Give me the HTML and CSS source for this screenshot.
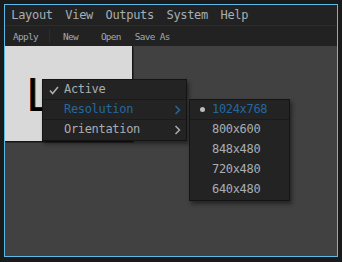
FILE: index.html
```html
<!DOCTYPE html>
<html lang="en">

<head>
    <meta charset="utf-8">
    <title>Display Settings</title>
    <link rel="stylesheet" href="styles.css">
</head>

<body>
    <div class="window">
        <nav class="menubar">
            <span class="menubar-item">Layout</span>
            <span class="menubar-item">View</span>
            <span class="menubar-item">Outputs</span>
            <span class="menubar-item">System</span>
            <span class="menubar-item">Help</span>
        </nav>

        <div class="toolbar">
            <button class="tool tool-apply">Apply</button>
            <span class="tool-sep"></span>
            <button class="tool tool-new">New</button>
            <button class="tool tool-open">Open</button>
            <button class="tool">Save As</button>
        </div>

        <div class="canvas">
            <div class="output">
                <span class="output-name">L</span>
            </div>

            <div class="menu context-menu">
                <div class="menu-item">
                    <svg class="check" width="10" height="9" viewBox="0 0 10 9">
                        <path d="M1 4.6 L3.6 7.6 L9 1" fill="none" stroke="#a9aeb3" stroke-width="1.6" />
                    </svg>
                    Active
                </div>
                <div class="menu-item current">
                    Resolution
                    <svg class="arrow" width="7" height="10" viewBox="0 0 7 10">
                        <path d="M1.5 1 L5.5 5 L1.5 9" fill="none" stroke="#2468a0" stroke-width="1.5" />
                    </svg>
                </div>
                <div class="menu-item">
                    Orientation
                    <svg class="arrow" width="7" height="10" viewBox="0 0 7 10">
                        <path d="M1.5 1 L5.5 5 L1.5 9" fill="none" stroke="#a9aeb3" stroke-width="1.5" />
                    </svg>
                </div>
            </div>

            <div class="menu sub-menu">
                <div class="menu-item current"><span class="bullet"></span>1024x768</div>
                <div class="menu-item">800x600</div>
                <div class="menu-item">848x480</div>
                <div class="menu-item">720x480</div>
                <div class="menu-item">640x480</div>
            </div>
        </div>
    </div>
</body>

</html>
```

FILE: styles.css
```css
body {
    margin: 0;
    background-color: #1a1a1a;
    font-family: "DejaVu Sans Mono", monospace;
}

.window {
    margin: 4px;
    width: 332px;
    height: 251px;
    border: 1px solid #5cb9ea;
    display: flex;
    flex-direction: column;
    background-color: #222222;
}

.menubar {
    display: flex;
    height: 20px;
    line-height: 20px;
    border-bottom: 1px solid #2b2b2b;
    font-size: 12px;
    letter-spacing: -0.32px;
    color: #a9aeb3;
}

.menubar-item {
    padding: 0 6.3px;
}

.toolbar {
    display: flex;
    align-items: center;
    height: 20px;
    padding-left: 8px;
    background-color: #222222;
}

.tool {
    background: none;
    border: none;
    padding: 0;
    font-family: "DejaVu Sans Mono", monospace;
    font-size: 9.4px;
    letter-spacing: -0.66px;
    color: #a2a8ae;
}

.tool-apply {
    margin-right: 11px;
}

.tool-sep {
    width: 1px;
    height: 14px;
    background-color: #2d2d2d;
    margin-right: 13px;
}

.tool-new {
    margin-right: 23px;
}

.tool-open {
    margin-right: 14px;
}

.canvas {
    flex: 1;
    position: relative;
    background-color: #414141;
}

.output {
    position: absolute;
    left: 0;
    top: 0;
    width: 127px;
    height: 95px;
    background-color: #d9d9d9;
    border-right: 1px solid #161616;
    border-bottom: 1px solid #161616;
    box-shadow: 1px 1px 0 #2a2a2a;
    overflow: hidden;
}

.output-name {
    position: absolute;
    left: 21px;
    top: 28px;
    font-family: "DejaVu Sans", sans-serif;
    font-size: 44px;
    line-height: 44px;
    color: #000000;
    text-shadow: 1px 0 0 #b06a1c;
}

.menu {
    position: absolute;
    background-color: #232323;
    border: 1px solid #141414;
    box-shadow: 2px 3px 4px rgba(0, 0, 0, 0.45);
    font-size: 12px;
    letter-spacing: -0.32px;
    color: #a9aeb3;
}

.context-menu {
    left: 37px;
    top: 33px;
    width: 143px;
}

.sub-menu {
    left: 184px;
    top: 53px;
    width: 99px;
}

.menu-item {
    position: relative;
    height: 19px;
    line-height: 19px;
    padding-left: 21px;
    border-bottom: 1px solid #232323;
}

.menu-item.current {
    color: #2468a0;
    border-top: 1px solid #1a1a1a;
    border-bottom: 1px solid #1a1a1a;
    margin-top: -1px;
}

.menu-item:first-child.current {
    border-top: none;
    margin-top: 0;
}

.sub-menu .menu-item {
    padding-left: 22px;
}

.check {
    position: absolute;
    left: 6px;
    top: 6px;
}

.arrow {
    position: absolute;
    right: 5px;
    top: 5px;
}

.bullet {
    position: absolute;
    left: 10px;
    top: 7px;
    width: 5px;
    height: 5px;
    border-radius: 50%;
    background-color: #b9bdc1;
}
```
